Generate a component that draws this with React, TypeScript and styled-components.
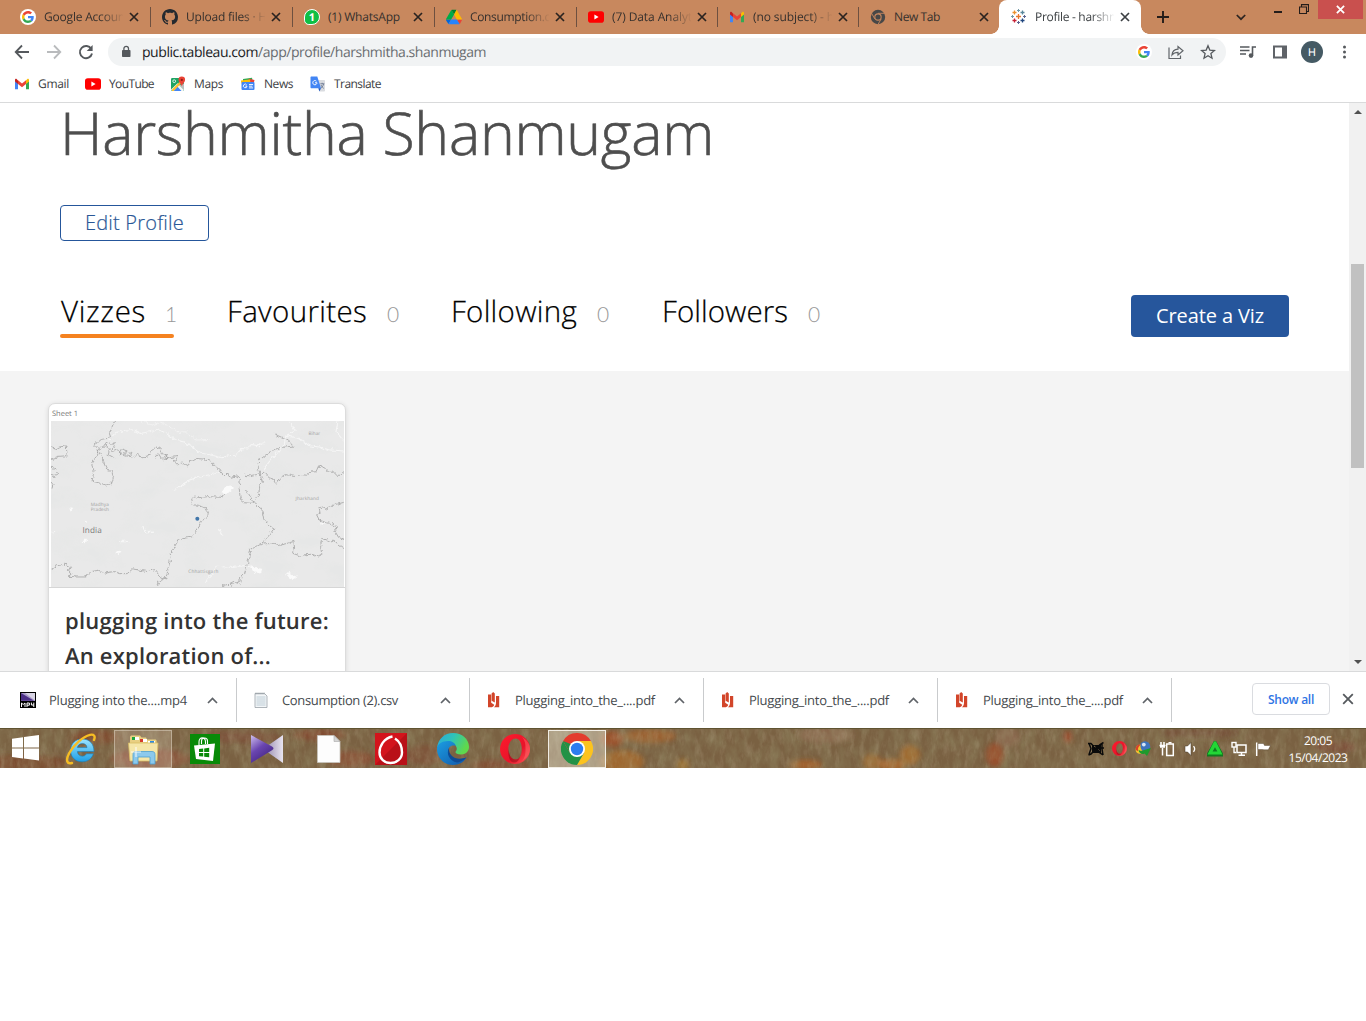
import React, { useLayoutEffect, useRef } from 'react';
import styled, { createGlobalStyle, css } from 'styled-components';

const GlobalStyle = createGlobalStyle`
  *, *::before, *::after { box-sizing: border-box; }
  html, body { margin: 0; background: #fff; }
  body { font-family: "Open Sans", "Noto Sans", sans-serif; text-rendering: geometricPrecision; overflow: hidden; }
  svg { display: block; flex: none; }
  button { font: inherit; margin: 0; padding: 0; border: 0; background: none; color: inherit; }
`;

const FitSpan = styled.span`
  display: inline-block;
  white-space: pre;
  flex: none;
`;

/* Spaces its letters so that the line takes up the given width. */
function Fit({ w, children }: { w: number; children: string }) {
  const ref = useRef<HTMLSpanElement>(null);
  useLayoutEffect(() => {
    const el = ref.current;
    if (!el) return;
    el.style.letterSpacing = '0px';
    const natural = el.getBoundingClientRect().width;
    el.style.letterSpacing = `${(w - natural) / children.length}px`;
  }, [w, children]);
  return <FitSpan ref={ref}>{children}</FitSpan>;
}

/* ---------- brand icons ---------- */

const GoogleG = ({ size = 16 }: { size?: number }) => (
  <svg width={size} height={size} viewBox="0 0 64 64">
    <circle cx="32" cy="32" r="32" fill="#fff" />
    <g transform="translate(8 8)">
      <path fill="#EA4335" d="M24 9.5c3.54 0 6.71 1.22 9.21 3.6l6.85-6.85C35.9 2.38 30.47 0 24 0 14.62 0 6.51 5.38 2.56 13.22l7.98 6.19C12.43 13.72 17.74 9.5 24 9.5z" />
      <path fill="#4285F4" d="M46.98 24.55c0-1.57-.15-3.09-.38-4.55H24v9.02h12.94c-.58 2.96-2.26 5.48-4.78 7.18l7.73 6c4.51-4.18 7.09-10.36 7.09-17.65z" />
      <path fill="#FBBC05" d="M10.53 28.59c-.48-1.45-.76-2.99-.76-4.59s.27-3.14.76-4.59l-7.98-6.19C.92 16.46 0 20.12 0 24c0 3.88.92 7.54 2.56 10.78l7.97-6.19z" />
      <path fill="#34A853" d="M24 48c6.48 0 11.93-2.13 15.89-5.81l-7.73-6c-2.15 1.45-4.92 2.3-8.16 2.3-6.26 0-11.57-4.22-13.47-9.91l-7.98 6.19C6.51 42.62 14.62 48 24 48z" />
    </g>
  </svg>
);

const GithubMark = () => (
  <svg width="16" height="16" viewBox="0 0 16 16">
    <path fill="#24292f" d="M8 0C3.58 0 0 3.58 0 8c0 3.54 2.29 6.53 5.47 7.59.4.07.55-.17.55-.38 0-.19-.01-.82-.01-1.49-2.01.37-2.53-.49-2.69-.94-.09-.23-.48-.94-.82-1.13-.28-.15-.68-.52-.01-.53.63-.01 1.08.58 1.23.82.72 1.21 1.87.87 2.33.66.07-.52.28-.87.51-1.07-1.78-.2-3.64-.89-3.64-3.95 0-.87.31-1.59.82-2.15-.08-.2-.36-1.02.08-2.12 0 0 .67-.21 2.2.82.64-.18 1.32-.27 2-.27s1.36.09 2 .27c1.53-1.04 2.2-.82 2.2-.82.44 1.1.16 1.92.08 2.12.51.56.82 1.27.82 2.15 0 3.07-1.87 3.75-3.65 3.95.29.25.54.73.54 1.48 0 1.07-.01 1.93-.01 2.2 0 .21.15.46.55.38A8.01 8.01 0 0 0 16 8c0-4.42-3.58-8-8-8z" />
  </svg>
);

const WhatsAppBadge = styled.span`
  display: grid;
  place-items: center;
  width: 16px;
  height: 16px;
  border-radius: 50% 50% 50% 30%;
  border: 1.5px solid #fff;
  background: #0fbf45;
  color: #fff;
  font-size: 11px;
  font-weight: 700;
  line-height: 1;
`;

const DriveIcon = () => (
  <svg width="16" height="16" viewBox="0 0 87 78">
    <path fill="#0066da" d="M7 67l4 6c1 2 2 3 3 4l14-24H0c0 2 0 3 1 5z" />
    <path fill="#00ac47" d="M44 25L30 1c-1 1-3 2-3 3L1 49c-1 1-1 3-1 4h28z" />
    <path fill="#ea4335" d="M74 77c1-1 2-2 3-3l8-14c1-2 2-4 2-7H59l6 12z" />
    <path fill="#00832d" d="M44 25L57 1c-1-1-3-1-4-1H34c-1 0-3 0-4 1z" />
    <path fill="#2684fc" d="M59 53H28L14 77c1 1 3 1 4 1h51c2 0 3 0 5-1z" />
    <path fill="#ffba00" d="M73 27L61 4c-1-1-2-2-4-3L44 25l15 28h28c0-1 0-3-1-4z" />
  </svg>
);

const YouTubeIcon = () => (
  <svg width="16" height="16" viewBox="0 0 16 16">
    <rect x="0" y="2.3" width="16" height="11.4" rx="2.8" fill="#f00" />
    <path d="M6.4 5.6v4.8L10.6 8z" fill="#fff" />
  </svg>
);

const GmailIcon = () => (
  <svg width="16" height="16" viewBox="0 0 16 16">
    <path fill="#4285f4" d="M1 5v8.2h3V7z" />
    <path fill="#34a853" d="M12 7v6.2h3V5z" />
    <path fill="#c5221f" d="M1 3.9V5.4L4 8V4.6L2.6 3C1.8 2.6 1 3.2 1 3.9z" />
    <path fill="#fbbc04" d="M12 4.6V8l3-2.6V3.9c0-.7-.9-1.3-1.6-.9z" />
    <path fill="#ea4335" d="M4 4.3L8 7.5l4-3.2V8l-4 3.2L4 8z" />
  </svg>
);

const ChromeMono = () => (
  <svg width="16" height="16" viewBox="0 0 16 16">
    <circle cx="8" cy="8" r="7.2" fill="#474747" />
    <path d="M8 4.3h6.6M4.8 9.9L1.5 4.2M11.2 9.9L7.9 15.6" stroke="#c8885f" strokeWidth=".9" />
    <circle cx="8" cy="8" r="3.7" fill="#c8885f" />
    <circle cx="8" cy="8" r="2.6" fill="#474747" />
  </svg>
);

const TableauIcon = () => {
  const crosses: [number, number, number, string][] = [
    [7.5, 7.5, 2.5, '#e8762c'],
    [3.5, 3.5, 2, '#eb912c'],
    [11.5, 3.5, 2, '#59879b'],
    [3.5, 11.5, 2, '#c72035'],
    [11.5, 11.5, 2, '#1f457e'],
    [7.5, 1.5, 1.5, '#7199a6'],
    [7.5, 13.5, 1.5, '#5b6591'],
    [1.5, 7.5, 1.5, '#7199a6'],
    [13.5, 7.5, 1.5, '#5b6591'],
  ];
  return (
    <svg width="16" height="16" viewBox="0 0 16 16">
      {crosses.map(([x, y, r, c], i) => (
        <path key={i} d={`M${x - r} ${y}h${r * 2}M${x} ${y - r}v${r * 2}`} stroke={c} strokeWidth={r > 1.6 ? 1.3 : 1} />
      ))}
    </svg>
  );
};

const MapsIcon = () => (
  <svg width="16" height="16" viewBox="0 0 16 16">
    <rect x="1" y="2" width="13" height="13" rx="1.2" fill="#1fa463" />
    <path d="M1 13.5L7.5 7.2l6.5 6.6c0 .7-.5 1.2-1.2 1.2H2.2z" fill="#f5f5f5" />
    <path d="M3.5 15l4-4.2 4 4.2z" fill="#4285f4" />
    <path d="M14 7.5L9.5 9.2 14 13.8z" fill="#bdbdbd" />
    <path d="M2 13.6L11.5 4l1.6 1.6L3.6 15H2z" fill="#fbc02d" />
    <circle cx="4.2" cy="5.2" r="1.4" fill="none" stroke="#fff" strokeWidth=".8" />
    <path d="M11.8.6a3.3 3.3 0 0 0-3.3 3.3c0 2.4 2.7 3.6 3.3 6.3.6-2.7 3.3-3.9 3.3-6.3A3.3 3.3 0 0 0 11.8.6z" fill="#ea4335" />
    <circle cx="11.8" cy="3.9" r="1.1" fill="#8c1d18" />
  </svg>
);

const NewsIcon = () => (
  <svg width="16" height="16" viewBox="0 0 16 16">
    <path d="M3 3L12 1.8l1 5.2H3z" fill="#34a853" />
    <path d="M9 2.8l5.5 1.2-1 4H7z" fill="#ea4335" />
    <path d="M.8 4.5l9-1 1 4H1.6z" fill="#fbbc04" />
    <rect x="1.5" y="6" width="13" height="8" rx="1" fill="#4285f4" />
    <path d="M6.7 8.9a1.8 1.8 0 1 0 .3 1.2H5.3M9 8.5h4M9 10.2h3.4M9 11.9h4" stroke="#fff" strokeWidth=".9" fill="none" />
  </svg>
);

const TranslateIcon = () => (
  <svg width="16" height="16" viewBox="0 0 16 16">
    <path d="M7 4h7.2c.5 0 .8.4.8.8v10c0 .5-.4.8-.8.8H9.5z" fill="#dadce0" />
    <path d="M1.5.5h5.8L11 12.3H1.5c-.6 0-1-.4-1-1V1.5c0-.6.4-1 1-1z" fill="#4285f4" />
    <path d="M8.3 12.3H11l-1.6 3.2z" fill="#1a56c4" />
    <path d="M6.4 5.2A2.1 2.1 0 1 0 7 6.8H5" stroke="#fff" strokeWidth="1" fill="none" />
    <path d="M10.3 7.8h4M12.2 6.8v1M13.6 7.8c-.4 2-1.4 3.4-2.6 4.4M11 9c.6 1.6 1.6 2.6 2.8 3.4" stroke="#5f6f8a" strokeWidth=".8" fill="none" />
  </svg>
);

/* ---------- browser chrome ---------- */

const Screen = styled.div`
  width: 1366px;
  height: 1021px;
  background: #fff;
  display: flex;
  flex-direction: column;
  overflow: hidden;
`;

const TabStrip = styled.header`
  flex: none;
  height: 34px;
  background: #c8885e;
  display: flex;
  padding-left: 8px;
`;

const Tab = styled.div<{ $w: number; $active?: boolean; $last?: boolean }>`
  position: relative;
  flex: none;
  width: ${({ $w }) => $w}px;
  height: 34px;
  padding: 0 0 0 12px;
  display: flex;
  align-items: center;
  font-size: 12px;
  color: #35302d;
  ${({ $active, $last }) =>
    $active
      ? css`
          background: #fff;
          border-radius: 8px 8px 0 0;
          color: #3c4043;
          &::before, &::after {
            content: '';
            position: absolute;
            bottom: 0;
            width: 8px;
            height: 8px;
          }
          &::before { left: -8px; background: radial-gradient(circle at 0 0, transparent 7.5px, #fff 8px); }
          &::after { right: -8px; background: radial-gradient(circle at 100% 0, transparent 7.5px, #fff 8px); }
        `
      : !$last &&
        css`
          &::after {
            content: '';
            position: absolute;
            right: -1px;
            top: 7px;
            width: 1px;
            height: 20px;
            background: #6d5040;
          }
        `}
`;

const TabIcon = styled.span`
  width: 16px;
  height: 16px;
  display: grid;
  place-items: center;
  margin-right: 8px;
  flex: none;
`;

const TabLabel = styled.span<{ $fade: boolean }>`
  width: 79px;
  overflow: hidden;
  line-height: 18px;
  ${({ $fade }) => $fade && css`mask-image: linear-gradient(90deg, #000 56px, transparent 80px);`}
`;

const TabClose = styled.button`
  width: 10px;
  height: 10px;
  margin-left: 6px;
`;

const Cross = ({ size, color, sw = 1.7 }: { size: number; color: string; sw?: number }) => (
  <svg width={size} height={size} viewBox="0 0 10 10">
    <path d="M1 1l8 8M9 1l-8 8" stroke={color} strokeWidth={sw} />
  </svg>
);

const NewTabButton = styled.button`
  margin: 11px 0 0 16px;
  width: 12px;
  height: 12px;
`;

const WindowControls = styled.div`
  margin-left: auto;
  display: flex;
  align-items: flex-start;
`;

const SearchTabs = styled.button`
  padding: 14px 28px 0 0;
`;

const Minimise = styled.button`
  margin: 11px 17px 0 0;
  width: 8px;
  height: 2px;
  background: #241d1a;
`;

const Restore = styled.button`
  margin: 4px 9px 0 0;
`;

const CloseWindow = styled.button`
  width: 45px;
  height: 19px;
  margin-right: 3px;
  background: #c9504e;
  display: grid;
  place-items: center;
`;

const Toolbar = styled.div`
  flex: none;
  height: 34px;
  display: flex;
  align-items: center;
  padding: 2px 14px 0 14px;
`;

const NavGroup = styled.div`
  width: 94px;
  display: flex;
  gap: 16px;
`;

const Omnibox = styled.div`
  width: 1118px;
  height: 28px;
  border-radius: 14px;
  background: #f1f3f4;
  display: flex;
  align-items: center;
  padding: 0 10px 0 12px;
  font-size: 14px;
`;

const UrlHost = styled.span`
  margin-left: 10px;
  color: #202124;
`;

const UrlPath = styled.span`
  color: #696d71;
`;

const OmniActions = styled.div`
  margin-left: auto;
  display: flex;
  align-items: center;
  gap: 16px;
`;

const Extensions = styled.div`
  display: flex;
  align-items: center;
  gap: 16px;
  margin-left: 14px;
`;

const Avatar = styled.span`
  width: 22px;
  height: 22px;
  margin: 0 -3px;
  border-radius: 50%;
  background: #455a64;
  color: #fff;
  display: grid;
  place-items: center;
  font: 11px Roboto, sans-serif;
`;

const BookmarkBar = styled.nav`
  flex: none;
  height: 35px;
  border-bottom: 1px solid #d9dadb;
  display: flex;
  padding: 8px 0 0 14px;
  font-size: 12px;
  color: #3c4043;
`;

const Bookmark = styled.a<{ $w: number }>`
  width: ${({ $w }) => $w}px;
  height: 16px;
  display: flex;
  align-items: center;
  gap: 8px;
  line-height: 14px;
`;

/* ---------- page ---------- */

const Viewport = styled.div`
  flex: none;
  height: 568px;
  display: flex;
`;

const Page = styled.main`
  width: 1349px;
  height: 568px;
  overflow: hidden;
  display: flex;
  flex-direction: column;
`;

const ProfileHead = styled.section`
  flex: none;
  height: 268px;
  padding: 0 60px;
`;

const Name = styled.h1`
  margin: 0;
  height: 102px;
  font-size: 59px;
  font-weight: 300;
  line-height: 61px;
  color: #4e4e4e;
  -webkit-text-stroke: 0.6px #4e4e4e;
`;

const EditButton = styled.button`
  width: 149px;
  height: 36px;
  border: 1px solid #25569b;
  border-radius: 4px;
  color: #2a5796;
  font-size: 20px;
  font-weight: 300;
  line-height: 34px;
  display: block;
  -webkit-text-stroke: 0.2px #2a5796;
`;

const ProfileNav = styled.div`
  margin-top: 51px;
  display: flex;
  align-items: flex-start;
`;

const NavTab = styled.a<{ $active?: boolean; $after: number }>`
  height: 46px;
  padding-left: 1px;
  margin-right: ${({ $after }) => $after}px;
  display: flex;
  align-items: baseline;
  font-size: 29.5px;
  font-weight: 300;
  line-height: 38px;
  color: #000;
  -webkit-text-stroke: 0.25px #000;
  position: relative;
  ${({ $active }) =>
    $active &&
    css`
      &::after {
        content: '';
        position: absolute;
        left: 0;
        right: 0;
        bottom: 0;
        height: 4px;
        border-radius: 2px;
        background: #f58220;
      }
    `}
`;

const Count = styled.span<{ $gap: number }>`
  margin-left: ${({ $gap }) => $gap}px;
  font-family: Lato, sans-serif;
  font-size: 21px;
  font-weight: 300;
  color: #999;
  -webkit-text-stroke: 0;
`;

const CreateButton = styled.button`
  margin: 3px 0 0 auto;
  width: 158px;
  height: 42px;
  border-radius: 4px;
  background: #26569c;
  color: #fff;
  font-size: 20px;
  line-height: 42px;
`;

const Gallery = styled.section`
  flex: 1;
  background: #f4f4f4;
  padding: 32px 48px;
  overflow: hidden;
`;

const VizCard = styled.article`
  width: 298px;
  height: 340px;
  background: #fff;
  border: 1px solid #dcdcdc;
  border-radius: 7px;
  box-shadow: 0 1px 5px rgba(0, 0, 0, 0.12);
`;

const Thumb = styled.div`
  height: 184px;
  padding: 0 2px;
  border-bottom: 1px solid #d6d6d6;
`;

const SheetName = styled.div`
  height: 17px;
  padding: 3px 0 0 1px;
  font-size: 7.5px;
  line-height: 14px;
  color: #777;
`;

const VizTitle = styled.h2`
  margin: 16px 0 0 16px;
  font-size: 22px;
  font-weight: 600;
  line-height: 35px;
  color: #333;
  display: flex;
  flex-direction: column;
  align-items: flex-start;
`;

const Scrollbar = styled.div`
  width: 17px;
  background: #f1f1f1;
  display: flex;
  flex-direction: column;
  align-items: center;
  padding: 7px 0 7px;
`;

const ScrollThumb = styled.div`
  width: 13px;
  height: 204px;
  margin: 150px 0 auto;
  background: #c1c1c1;
`;

const Arrow = styled.span<{ $up?: boolean }>`
  border: 4px solid transparent;
  ${({ $up }) => ($up ? 'border-bottom-color: #505050; border-top: 0;' : 'border-top-color: #505050; border-bottom: 0;')}
`;

const MapText = styled.text<{ $dark?: boolean }>`
  font-family: "Open Sans", sans-serif;
  fill: ${({ $dark }) => ($dark ? '#777' : '#a0a0a0')};
`;

const MapDrawing = () => (
  <svg width="293" height="166" viewBox="33 80 877 496" preserveAspectRatio="none">
    <defs>
      <filter id="terrain" x="0" y="0" width="100%" height="100%">
        <feTurbulence type="fractalNoise" baseFrequency="0.008 0.014" numOctaves="4" seed="8" />
        <feColorMatrix values="0 0 0 0 .76  0 0 0 0 .78  0 0 0 0 .77  4 0 0 0 -1.8" />
      </filter>
      <filter id="jag" x="-5%" y="-5%" width="110%" height="110%">
        <feTurbulence type="fractalNoise" baseFrequency="0.09" numOctaves="2" seed="3" result="n" />
        <feDisplacementMap in="SourceGraphic" in2="n" scale="14" xChannelSelector="R" yChannelSelector="G" />
      </filter>
    </defs>
    <rect x="33" y="80" width="877" height="496" fill="#e9e9e9" />
    <rect x="33" y="80" width="877" height="496" filter="url(#terrain)" opacity=".3" />
    <g fill="none" stroke="#f6f6f6" strokeWidth="3" strokeLinejoin="round" filter="url(#jag)">
      <path d="M206 137l20-22 28-8 24-1 22 11 32-6 26-4 20 10 26 20 28 6 22 13 28 20 32 6 30 8 20-6 22-2 18-20 20 2 8-14 24 4 18-12" />
      <path d="M305 80l28 12 24-6 30 8 28 20 22-2 30 25 40-2" strokeWidth="2" />
      <path d="M746 80l18 30-28 14-4 22-22 30-24 26-18 24M740 124l36 8 30 22 30 4 28 8 44 4M908 138l-22-26 6-32" />
      <path d="M395 286l22-8 30-22 36-10 36-8 24-6M495 560l20-22 14-24 50 4 34-6 20 4 20 4" />
      <path d="M304 394l16 20 20-2M534 400l14 22M45 410l-10 2M240 440h24" strokeWidth="4" />
    </g>
    <g fill="#fafafa" filter="url(#jag)">
      <path d="M545 292l10-16 16-3 9 5-8 10-12 10zM630 510l16 8 20 4-4 12-14 3-12-14zM737 535l12-4 2 8 18 6-14 10-14-12zM125 440l10-10 6 8-6 8zM228 474l10-6 4 6-10 4zM840 380l10 4-6 8zM88 338l8 2-6 8zM134 378l7 2-3 8z" />
    </g>
    <g fill="none" stroke="#a3a3a3" strokeWidth="2.4" strokeLinejoin="round" filter="url(#jag)">
      <path d="M223 80l-10 24-5 14 4 12-26 5-18 8-4 12 8 9 18-8 8-12 16 8 8-8 4 10-14 10 6 8 14-6 16 16 10-12 14 4 2 14 18-8 14 10 16-2 10-18 16-12 12 4 6 16 16 4-14 14 20-6 22-4-4 14-8-2 10 10 18-2 16 8 8-16 16-6 28 2 20 10 16 16 8 6 10 14 12 0 10 8 22-4 8 8-4 30 4 32 12 10 20 2 12-8 10-16 4-28 8-12-12-40-4-16 10-12 24-18 30-16 44-5-15-16-32-14-6-10" />
      <path d="M196 150l12 14-4 16 18 10M240 180l6-16 16 6-10 14 20 2M345 192l10-14 10 16 10-14 10 14" />
      <path d="M178 164l-8 20-16 22 8 20-6 34 18 4 26 10 14-6 6-20-6-20-14-4-10-20-8-20-8-16" />
      <path d="M33 160l14 4 10-6 22-4 2 30-32 2-2 6-14 4M33 218l16 8 4 14-10 6-10-4M33 262l6 8-3 12" />
      <path d="M614 242l12 2 20-4 14-2 14-2 12 14 14 4 8 12 12-16 18-10 16 4 12 2 14-6 18 2 14-10 14 0 8-18 18 6 8 10 16 0 16 16 14-12 8 4h20" />
      <path d="M608 282l12 8 12 20 10 16 18 14 6 14 4 20 6 6 10 12 14 10-10 14-22 26-24 14-14 10-4 20-6 24-8 26-10 10-6 20-12-4-12 6-22 2v6" />
      <path d="M668 438l14 12 16-4 18 6 44-12 2 20-4 16 24 8 8-4 24-2 20 8 10-6-4-22 2-20 2-8 26 10 10-4 14 14 20 14" />
      <path d="M910 322l-28 8-16 8-12 6-4-8-14 4 2 14-10 6 8 16 16 6 24 6 14 10-8 10 12 20 16 6" />
      <path d="M556 296l-16 12-40-2-32 4-8-8-6 14 4 14 14 2 20 6 12 14-2 16-22 12-4 16-12 18-8 12-22 4-20 6-14 24-10 16 2 14-8 28-4 22-12 14-10 4-6 12" />
      <path d="M33 524l20-12 22-4 16 8-6 12 8 10-8 6 26 2 24 0 18-16 22-4 20 8 26-4 20 6 20 0 16-14 24 4 22 4 20-6 18 22 18 6" />
    </g>
    <MapText x="804" y="121" fontSize="14">Bihar</MapText>
    <MapText x="765" y="317" fontSize="14" textLength="70">Jharkhand</MapText>
    <MapText x="152" y="333" fontSize="14" textLength="54">Madhya</MapText>
    <MapText x="152" y="350" fontSize="14" textLength="54">Pradesh</MapText>
    <MapText x="444" y="533" fontSize="14" textLength="90">Chhattisgarh</MapText>
    <MapText x="127" y="415" fontSize="24.5" textLength="58" $dark>India</MapText>
    <circle cx="471" cy="372" r="6" fill="#4377aa" />
  </svg>
);

/* ---------- downloads shelf ---------- */

const Shelf = styled.footer`
  flex: none;
  height: 57px;
  border-top: 1px solid #d9dadb;
  background: #fff;
  display: flex;
  align-items: center;
  padding: 0 12px 0 3px;
  font-size: 13px;
  color: #45494d;
`;

const Download = styled.div<{ $size: number; $inset: number }>`
  width: ${({ $size }) => $size}px;
  height: 44px;
  border-right: 1px solid #c9cbcd;
  padding-left: ${({ $inset }) => $inset}px;
  display: flex;
  align-items: center;
`;

const FileIcon = styled.span`
  width: 29px;
  flex: none;
`;

const Chevron = styled.span`
  margin: 0 18px 0 auto;
`;

const ShowAll = styled.button`
  margin-left: auto;
  width: 78px;
  height: 32px;
  margin-bottom: 2px;
  border: 1px solid #dadce0;
  border-radius: 4px;
  color: #2f74e4;
  font-size: 12px;
  font-weight: 600;
`;

const ShelfClose = styled.button`
  margin: 0 0 2px 12px;
`;

const Mp4Icon = () => (
  <svg width="16" height="16" viewBox="0 0 16 16">
    <rect width="16" height="16" fill="#000" />
    <rect x="1" y="1" width="14" height="8" fill="#a99bc9" />
    <path d="M1 1l13 7.8H1z" fill="#4b2f86" />
    <path d="M15 1v7.6L5 1z" fill="#d8d4e4" />
    <path d="M1.5 15v-4l1.7 1.5L5 11v4M7 15v-4h2.4v2.2H7M11.4 10.6v2.4H14M13.8 10.6V15" stroke="#fff" strokeWidth="1" fill="none" />
  </svg>
);

const CsvIcon = () => (
  <svg width="16" height="16" viewBox="0 0 16 16">
    <path d="M2 1.500h9.500L14 4v11.500H2z" fill="#f3f6f8" stroke="#9aa2a8" strokeWidth=".8" />
    <path d="M3 .5v2M5 .5v2M7 .5v2M9 .5v2M11 .5v2" stroke="#8f979d" strokeWidth=".8" />
    <path d="M3.500 5h9M3.500 7h9M3.500 9h9M3.500 11h9M3.500 13h9" stroke="#b9c8d2" strokeWidth=".9" />
  </svg>
);

const PdfIcon = () => (
  <svg width="16" height="16" viewBox="0 0 16 16">
    <path d="M2 2.500h3.200v8.300l3 2c-.2 1.300-1 2-2.400 2.500H2z" fill="#d2452a" />
    <path d="M5.600 1.500L7.200 0l1.600 1.500V10.500L5.600 8.800z" fill="#d2452a" />
    <path d="M10 4h3.200v11.300H7.900C9.700 14 10 12.500 10 10z" fill="#d2452a" />
  </svg>
);

/* ---------- taskbar ---------- */

const Taskbar = styled.div`
  position: relative;
  flex: none;
  height: 40px;
  overflow: hidden;
  background: #796141;
  border-top: 1px solid #5f5331;
`;

const Wallpaper = styled.div`
  position: absolute;
  inset: 0;
`;

const TaskRow = styled.div`
  position: relative;
  height: 39px;
  display: flex;
  align-items: center;
`;

const StartButton = styled.button`
  width: 50px;
  height: 39px;
  padding: 0 0 2px 0;
  display: grid;
  place-items: center;
`;

const TaskSlot = styled.button<{ $state?: 'open' | 'focus' }>`
  width: 58px;
  height: 38px;
  margin: 0 2px;
  display: grid;
  place-items: center;
  border: 1px solid transparent;
  ${({ $state }) => $state === 'open' && css`background: rgba(215, 195, 175, 0.28); border-color: rgba(225, 215, 200, 0.5);`}
  ${({ $state }) => $state === 'focus' && css`background: rgba(225, 220, 200, 0.48); border-color: #f1ede4;`}
`;

const Tray = styled.div`
  margin-left: auto;
  display: flex;
  align-items: center;
  gap: 8px;
`;

const Clock = styled.div`
  width: 76px;
  margin: 0 10px 0 9px;
  color: #fff;
  font-size: 12px;
  line-height: 17px;
  display: flex;
  flex-direction: column;
  align-items: center;
`;

const petals: [number, number, number, number, string][] = [
  [20, 34, 50, 8, '#7c4a30'], [95, 8, 24, 7, '#804a30'], [150, 30, 40, 10, '#8a4e36'], [240, 8, 40, 6, '#7c5038'],
  [320, 6, 26, 6, '#82482f'], [350, 30, 24, 8, '#8a4c32'], [425, 26, 20, 10, '#7f533a'], [500, 36, 30, 5, '#844e34'],
  [622, 33, 22, 12, '#a56a2e'], [612, 10, 12, 8, '#a0522a'], [650, 7, 26, 7, '#a0602e'], [806, 36, 16, 5, '#a8602a'],
  [872, 33, 9, 8, '#a0672d'], [892, 36, 14, 6, '#ac662a'], [910, 26, 10, 10, '#a66c2e'], [995, 26, 9, 12, '#9c4c2b'],
  [826, 6, 28, 8, '#8c6a50'], [1008, 8, 12, 10, '#8c6a50'], [683, 36, 6, 6, '#a0722f'], [1068, 8, 4, 6, '#a04a2a'],
  [1200, 4, 40, 4, '#765038'], [1335, 18, 22, 6, '#7e503a'],
];

const WallpaperDrawing = () => (
  <svg width="1366" height="40" viewBox="0 0 1366 40">
    <defs>
      <filter id="grass" x="0" y="0" width="100%" height="100%">
        <feTurbulence type="fractalNoise" baseFrequency="0.1 0.05" numOctaves="4" seed="4" />
        <feColorMatrix values="0 0 0 0 .38  0 0 0 0 .39  0 0 0 0 .21  0 2 0 0 -.7" />
      </filter>
      <filter id="light" x="0" y="0" width="100%" height="100%">
        <feTurbulence type="fractalNoise" baseFrequency="0.2 0.07" numOctaves="4" seed="12" />
        <feColorMatrix values="0 0 0 0 .6  0 0 0 0 .51  0 0 0 0 .36  0 0 3 0 -1.4" />
      </filter>
      <filter id="soft"><feGaussianBlur stdDeviation="2.5" /></filter>
    </defs>
    <rect width="1366" height="40" fill="#7a6142" />
    <g filter="url(#soft)">
      {petals.map(([x, y, rx, ry, c], i) => (
        <ellipse key={i} cx={x} cy={y} rx={rx} ry={ry} fill={c} opacity=".85" />
      ))}
    </g>
    <rect width="1366" height="40" filter="url(#grass)" opacity=".3" />
    <rect width="1366" height="40" filter="url(#light)" opacity=".16" />
  </svg>
);

const WindowsLogo = () => (
  <svg width="27" height="26" viewBox="0 0 27 26">
    <path fill="#fff" d="M0 3.8l11-1.6v10.2H0zM12 2l15-2v12.4H12zM0 13.4h11v10.2L0 22zM12 13.4h15V25.6l-15-2z" />
  </svg>
);

const IeIcon = () => (
  <svg width="32" height="32" viewBox="0 0 32 32">
    <defs>
      <linearGradient id="ie" x1="0" y1="0" x2="0" y2="1"><stop offset="0" stopColor="#9ce4ff" /><stop offset="1" stopColor="#1d9fe6" /></linearGradient>
    </defs>
    <path d="M29 18.6H12.4c.2 2.8 2.2 4.6 4.8 4.6 2 0 3.4-.8 4.2-2.4h7c-1.6 5-5.8 8-11.2 8-7 0-11.6-4.6-11.6-11.2C5.6 10.6 10.4 6 17.2 6 24.4 6 29 10.6 29 18.6zM22 14.6c-.2-2.4-2-4-4.6-4s-4.6 1.6-5 4z" fill="url(#ie)" stroke="#167db8" strokeWidth=".6" />
    <path d="M7 30C2 31.5.4 27.5 4 20.5 8.5 12 18 3.5 25 1.8c4-.9 5.6 1.3 4 5.2" fill="none" stroke="#f6bd24" strokeWidth="2.4" strokeLinecap="round" />
  </svg>
);

const ExplorerIcon = () => (
  <svg width="34" height="32" viewBox="0 0 34 32">
    <path d="M4 4c0-1 1-1.6 2-1.6h8l1.5 2H20l1 2h8c1 0 1.6.6 1.6 1.6V28H4z" fill="#e8cf82" />
    <path d="M6 4h7v3H6zM14 6h7v3h-7zM22 8h7v3h-7z" fill="#fff" />
    <path d="M6 4h3v3H6z" fill="#1ea43c" /><path d="M14 6h3v3h-3z" fill="#d43b2b" /><path d="M24 8h4v3h-4z" fill="#2b8be0" />
    <path d="M2.5 10H32l-1 18H4z" fill="#f5e6a8" stroke="#d8bd62" strokeWidth=".8" />
    <path d="M7 31V21.5c0-2 1-3 3-3h16c2 0 3 1 3 3V31h-5v-7H12v7z" fill="#8cc9ec" stroke="#4c9fd0" strokeWidth=".8" />
    <path d="M10 14v10M5 19h10" stroke="#fff" strokeWidth="1.2" opacity=".8" />
  </svg>
);

const StoreIcon = () => (
  <svg width="30" height="30" viewBox="0 0 30 30">
    <rect width="30" height="30" fill="#088a08" />
    <path d="M9 11V8c0-5.5 6.5-5.5 6.5 0v2M11.5 10V7c0-4 6-4 6 0v3" fill="none" stroke="#fff" strokeWidth="1.1" />
    <path d="M4 11.5l21-2-2 17.5-17-2z" fill="#fff" />
    <path d="M9 15l4.2-.5V18H9zM14.2 14.4l5-.6V18h-5zM9 19h4.2v3.6L9 22.2zM14.2 19h5v4.3l-5-.6z" fill="#088a08" />
  </svg>
);

const KmIcon = () => (
  <svg width="32" height="28" viewBox="0 0 32 28">
    <defs>
      <linearGradient id="km" x1="0" y1="0" x2=".6" y2="1"><stop offset="0" stopColor="#cfc0ee" /><stop offset=".5" stopColor="#6a46b0" /><stop offset="1" stopColor="#422382" /></linearGradient>
      <linearGradient id="km2" x1="0" y1="0" x2="1" y2="0"><stop offset="0" stopColor="#8d80a8" /><stop offset="1" stopColor="#e8e4f0" /></linearGradient>
    </defs>
    <path d="M32 0v28L12 14z" fill="url(#km2)" />
    <path d="M0 0l21 11.5c2 1.2 2 2.5 0 3.7L0 28z" fill="url(#km)" />
  </svg>
);

const DocIcon = () => (
  <svg width="24" height="28" viewBox="0 0 24 28">
    <path d="M.5.5h16.5l6 6V27.5H.5z" fill="#fdfdfd" stroke="#c8c4bc" strokeWidth=".8" />
    <path d="M17 .5v6h6z" fill="#d5d5d5" stroke="#aaa" strokeWidth=".6" />
  </svg>
);

const DropIcon = () => (
  <svg width="32" height="32" viewBox="0 0 32 32">
    <rect width="32" height="32" fill="#d3141c" />
    <path d="M32 0v32H0z" fill="#a90d14" opacity=".6" />
    <path d="M17.5 3.5C9 5 4.500 13 4.500 19.500 4.500 26 9.500 30 15.500 30S27 26 27 19.500C27 13 24 8 20 5.500" fill="none" stroke="#fff" strokeWidth="2.4" />
  </svg>
);

const EdgeIcon = () => (
  <svg width="32" height="32" viewBox="0 0 32 32">
    <defs>
      <linearGradient id="ed1" x1="0" y1="0" x2="1" y2=".4"><stop offset="0" stopColor="#2aa8de" /><stop offset=".5" stopColor="#2fc3b8" /><stop offset="1" stopColor="#5fd94c" /></linearGradient>
      <linearGradient id="ed2" x1="0" y1="0" x2="1" y2="1"><stop offset="0" stopColor="#1b9de2" /><stop offset="1" stopColor="#1257a8" /></linearGradient>
    </defs>
    <path d="M0 15C1 6 7.5 0 16 0c9 0 16 6 16 14 0 4.5-3.5 7.5-8 7.5-3.5 0-5.5-1-5.5-2.2 0-.9 1.3-1.5 1.3-3.7 0-3-3.3-5.6-7.8-5.6C6 10 1.5 12 0 15z" fill="url(#ed1)" />
    <path d="M0 16C0 11 5 8 11 8c4 0 7 2 8 5-6-2-9 3-7 8 2 5 8 7.5 17.5 3.5C27 29 22 32 16 32 7 32 0 25 0 16z" fill="url(#ed2)" />
    <path d="M12 15c-3 5 0 13 8 14.5 4-.5 8-3 9.5-5.3C20 28 11.5 24 12 15z" fill="#0e4b95" />
  </svg>
);

const OperaIcon = ({ size = 30 }: { size?: number }) => (
  <svg width={size} height={size} viewBox="0 0 30 30">
    <defs>
      <linearGradient id="op" x1="0" y1="0" x2="1" y2="1"><stop offset="0" stopColor="#ff1b2d" /><stop offset=".6" stopColor="#e8142a" /><stop offset="1" stopColor="#ff5a5a" /></linearGradient>
    </defs>
    <path fillRule="evenodd" d="M15 0a15 15 0 1 0 0 30 15 15 0 0 0 0-30zM15.5 4.5c4 0 6.3 4.8 6.3 10.5s-2.3 10.5-6.3 10.5S8.3 20.7 8.3 15 11.5 4.5 15.5 4.5z" fill="url(#op)" />
    <path d="M22 3c3 3 3.5 7 3.5 12S25 24 22 27c5-3 8-7 8-12S27 6 22 3z" fill="#ff6a6a" opacity=".5" />
    <path d="M8.5 13C8.5 20 11 25.5 15.5 25.5c2 0 3.5-1 4.5-3-1 4-3 6-6 6-4 0-6.5-6-5.5-15.5z" fill="#8f0a16" opacity=".5" />
  </svg>
);

const ChromeIcon = () => (
  <svg width="32" height="32" viewBox="0 0 32 32">
    <path d="M2.14 8A16 16 0 0 1 29.86 8L16 8z" fill="#e33b2e" />
    <path d="M29.86 8A16 16 0 0 1 16 32L22.9 20 22.9 12 16 8z" fill="#fcc31e" />
    <path d="M16 32A16 16 0 0 1 2.14 8L9.07 20 16 24 22.9 20z" fill="#239246" />
    <path d="M2.14 8L9.07 20 16 8z" fill="#e33b2e" />
    <path d="M2.14 8L9.07 20 12 12z" fill="#239246" />
    <circle cx="16" cy="16" r="8" fill="#fff" />
    <circle cx="16" cy="16" r="6.2" fill="#2c7cf0" />
  </svg>
);

const BugIcon = () => (
  <svg width="16" height="16" viewBox="0 0 16 16">
    <path d="M4 4h9v8H4z" fill="#0a0a0a" />
    <path d="M0 2.500h3l9 9.500 3 2M15.500 1.500l-3.500 2L3 13l-2.500 1M1 2.500l2 5-2 6M14 3v5l1 6M13 7h3" stroke="#0a0a0a" strokeWidth="1.5" fill="none" />
    <path d="M6 5l1.500 1M10.500 8.500l1 1" stroke="#7c6748" strokeWidth="1" />
  </svg>
);

const IdmIcon = () => (
  <svg width="16" height="16" viewBox="0 0 16 16">
    <circle cx="10" cy="5.5" r="5.2" fill="#3f74bd" />
    <circle cx="8.800" cy="3.6" r="1.9" fill="#d7e7f7" />
    <path d="M.6 9C.6 5 3 3.500 5.600 3.800 5 6 6 9.500 9 11c-3 3-8.400 2-8.400-2z" fill="#f1c22e" />
    <path d="M.6 7.500C1 4.500 3.600 3 6 3.600 4 5 2.600 7 3 10 1.600 10 .6 9 .6 7.500z" fill="#d8432b" />
    <path d="M3.500 8.500c1 1.500 2.500 1.500 4 1L16 7l-4 8-2.500-2.500C7 14 3.500 12 3.500 8.500z" fill="#1e9a2c" />
  </svg>
);

const PowerIcon = () => (
  <svg width="16" height="16" viewBox="0 0 16 16">
    <path d="M2 1v3M5 1v3M.5 4.500h6M1 6h5M3.500 7v7.500" stroke="#fff" strokeWidth="1.5" />
    <rect x="7.7" y="3" width="6.6" height="11.5" fill="none" stroke="#fff" strokeWidth="1.5" />
    <path d="M9.500 1.700h3" stroke="#fff" strokeWidth="1.4" />
  </svg>
);

const SpeakerIcon = () => (
  <svg width="16" height="16" viewBox="0 0 16 16">
    <path d="M2 5h2.500L8 1.500v13L4.500 11H2z" fill="#fff" stroke="#3d3222" strokeWidth=".5" />
    <path d="M10.500 5.200c1.500 1.800 1.500 3.800 0 5.600" fill="none" stroke="#fff" strokeWidth="1.3" />
  </svg>
);

const TriangleIcon = () => (
  <svg width="16" height="16" viewBox="0 0 16 16">
    <path d="M6.800.3h2.400L16 12.500v3H0v-3z" fill="#0f7a1f" />
    <path fillRule="evenodd" d="M7 .5h2L15.500 13.500H.5zM8 6.200l2.400 4.300H5.600z" fill="#22d636" />
  </svg>
);

const NetworkIcon = () => (
  <svg width="16" height="16" viewBox="0 0 16 16">
    <path d="M6 4h9v7.500H6zM10.500 11.500V14M7.500 14.300h6.500" fill="none" stroke="#fff" strokeWidth="1.5" />
    <rect x="1" y="1.5" width="4" height="4.5" fill="none" stroke="#fff" strokeWidth="1.4" />
    <path d="M3 6v5.500h2" fill="none" stroke="#fff" strokeWidth="1.3" />
  </svg>
);

const FlagIcon = () => (
  <svg width="16" height="16" viewBox="0 0 16 16">
    <path d="M1.700 1.500V15" stroke="#fff" strokeWidth="1.5" />
    <path d="M3 2.500h5.500l1 2H15.500l-2.200 4.300H9L7.500 8.500H3z" fill="#fff" stroke="#4a3a28" strokeWidth=".4" />
  </svg>
);

/* ---------- data ---------- */

const tabs: { icon: React.ReactNode; label: string; w: number; size: number; active?: boolean }[] = [
  { icon: <GoogleG />, label: 'Google Accoun', w: 81, size: 142 },
  { icon: <GithubMark />, label: 'Upload files · H', w: 81, size: 142 },
  { icon: <WhatsAppBadge>1</WhatsAppBadge>, label: '(1) WhatsApp', w: 72, size: 142 },
  { icon: <DriveIcon />, label: 'Consumption.c', w: 80, size: 142 },
  { icon: <YouTubeIcon />, label: '(7) Data Analyt', w: 80, size: 141 },
  { icon: <GmailIcon />, label: '(no subject) - h', w: 81, size: 141 },
  { icon: <ChromeMono />, label: 'New Tab', w: 46, size: 141 },
  { icon: <TableauIcon />, label: 'Profile - harshn', w: 81, size: 142, active: true },
];

const bookmarks: [React.ReactNode, string, number, number][] = [
  [<GmailIcon />, 'Gmail', 31, 71],
  [<YouTubeIcon />, 'YouTube', 45, 85],
  [<MapsIcon />, 'Maps', 29, 70],
  [<NewsIcon />, 'News', 29, 70],
  [<TranslateIcon />, 'Translate', 47, 80],
];

const sections: { name: string; w: number; count: string; gap: number; after: number; active?: boolean }[] = [
  { name: 'Vizzes', w: 85, count: '1', gap: 19, after: 52, active: true },
  { name: 'Favourites', w: 140, count: '0', gap: 20, after: 51 },
  { name: 'Following', w: 126, count: '0', gap: 20, after: 52 },
  { name: 'Followers', w: 126, count: '0', gap: 20, after: 0 },
];

const downloads: { icon: React.ReactNode; name: string; w: number; size: number; inset: number }[] = [
  { icon: <Mp4Icon />, name: 'Plugging into the....mp4', w: 138, size: 234, inset: 17 },
  { icon: <CsvIcon />, name: 'Consumption (2).csv', w: 116, size: 233, inset: 16 },
  { icon: <PdfIcon />, name: 'Plugging_into_the_....pdf', w: 140, size: 234, inset: 16 },
  { icon: <PdfIcon />, name: 'Plugging_into_the_....pdf', w: 140, size: 234, inset: 16 },
  { icon: <PdfIcon />, name: 'Plugging_into_the_....pdf', w: 140, size: 234, inset: 16 },
];

const tasks: { icon: React.ReactNode; state?: 'open' | 'focus' }[] = [
  { icon: <IeIcon /> },
  { icon: <ExplorerIcon />, state: 'open' },
  { icon: <StoreIcon /> },
  { icon: <KmIcon /> },
  { icon: <DocIcon /> },
  { icon: <DropIcon /> },
  { icon: <EdgeIcon /> },
  { icon: <OperaIcon /> },
  { icon: <ChromeIcon />, state: 'focus' },
];

export default function App() {
  return (
    <Screen>
      <GlobalStyle />
      <TabStrip>
        {tabs.map((t, i) => (
          <Tab key={t.label} $w={t.size} $active={t.active} $last={i === tabs.length - 2}>
            <TabIcon>{t.icon}</TabIcon>
            <TabLabel $fade={t.w > 75}><Fit w={t.w}>{t.label}</Fit></TabLabel>
            <TabClose><Cross size={10} color={t.active ? '#3c4043' : '#2a2320'} /></TabClose>
          </Tab>
        ))}
        <NewTabButton>
          <svg width="12" height="12" viewBox="0 0 12 12"><path d="M6 0v12M0 6h12" stroke="#241d1a" strokeWidth="1.9" /></svg>
        </NewTabButton>
        <WindowControls>
          <SearchTabs>
            <svg width="10" height="7" viewBox="0 0 10 7"><path d="M.8 1l4.2 4.2L9.2 1" fill="none" stroke="#2e2521" strokeWidth="1.7" /></svg>
          </SearchTabs>
          <Minimise />
          <Restore>
            <svg width="10" height="10" viewBox="0 0 10 10"><path d="M.5 3h7v6.5h-7zM2.5 3V.6h7v6.9h-2" fill="none" stroke="#241d1a" strokeWidth="1.1" /></svg>
          </Restore>
          <CloseWindow><Cross size={9} color="#fff" sw={2} /></CloseWindow>
        </WindowControls>
      </TabStrip>

      <Toolbar>
        <NavGroup>
          <svg width="16" height="16" viewBox="0 0 16 16"><path d="M15 8H2M8 1.5L1.7 8 8 14.5" fill="none" stroke="#55595d" strokeWidth="1.8" /></svg>
          <svg width="16" height="16" viewBox="0 0 16 16"><path d="M1 8h13M8 1.5L14.3 8 8 14.5" fill="none" stroke="#b9bbbd" strokeWidth="1.8" /></svg>
          <svg width="16" height="16" viewBox="0 0 16 16"><path d="M13.3 5A6.1 6.1 0 1 0 14 9.5" fill="none" stroke="#55595d" strokeWidth="1.9" /><path d="M14.6 1v6H8.7z" fill="#55595d" /></svg>
        </NavGroup>
        <Omnibox>
          <svg width="12" height="14" viewBox="0 0 12 14"><rect x="2" y="5" width="8.5" height="7" rx=".8" fill="#55595d" /><path d="M3.9 5.5V3.6a2.3 2.3 0 0 1 4.6 0v1.9" fill="none" stroke="#55595d" strokeWidth="1.3" /></svg>
          <UrlHost><Fit w={116}>public.tableau.com</Fit></UrlHost>
          <UrlPath><Fit w={228}>/app/profile/harshmitha.shanmugam</Fit></UrlPath>
          <OmniActions>
            <GoogleG size={16} />
            <svg width="16" height="16" viewBox="0 0 16 16"><path d="M1 3.5v11h11.5v-3M4 11c.3-4 2.6-5.7 6-5.8V2.5l5 4.3-5 4.2V8.4C7.5 8.4 5.6 9 4 11z" fill="none" stroke="#606468" strokeWidth="1.2" /></svg>
            <svg width="16" height="16" viewBox="0 0 16 16"><path d="M8 1.8l1.8 4.3 4.7.4-3.6 3.1 1.1 4.6L8 11.7l-4 2.5 1.1-4.6L1.5 6.5l4.7-.4z" fill="none" stroke="#55595d" strokeWidth="1.3" /></svg>
          </OmniActions>
        </Omnibox>
        <Extensions>
          <svg width="16" height="16" viewBox="0 0 16 16"><path d="M0 3h9.5M0 6.5h9.5M0 10h6" stroke="#55595d" strokeWidth="1.5" /><path d="M12.5 11.5V3H16" fill="none" stroke="#55595d" strokeWidth="1.6" /><circle cx="11" cy="11.6" r="2.3" fill="#55595d" /></svg>
          <svg width="16" height="16" viewBox="0 0 16 16"><path fillRule="evenodd" d="M1 1.5h14v13H1zM3 3.5v9h7v-9z" fill="#5f6368" /></svg>
          <Avatar>H</Avatar>
          <svg width="16" height="16" viewBox="0 0 16 16"><circle cx="8.5" cy="3" r="1.5" fill="#55595d" /><circle cx="8.5" cy="8" r="1.5" fill="#55595d" /><circle cx="8.5" cy="13" r="1.5" fill="#55595d" /></svg>
        </Extensions>
      </Toolbar>

      <BookmarkBar>
        {bookmarks.map(([icon, label, w, slot]) => (
          <Bookmark key={label} $w={slot}>{icon}<Fit w={w}>{label}</Fit></Bookmark>
        ))}
      </BookmarkBar>

      <Viewport>
        <Page>
          <ProfileHead>
            <Name><Fit w={654}>Harshmitha Shanmugam</Fit></Name>
            <EditButton><Fit w={99}>Edit Profile</Fit></EditButton>
            <ProfileNav>
              {sections.map((s) => (
                <NavTab key={s.name} $active={s.active} $after={s.after}>
                  <Fit w={s.w}>{s.name}</Fit>
                  <Count $gap={s.gap}><Fit w={s.active ? 9 : 12}>{s.count}</Fit></Count>
                </NavTab>
              ))}
              <CreateButton><Fit w={108}>Create a Viz</Fit></CreateButton>
            </ProfileNav>
          </ProfileHead>
          <Gallery>
            <VizCard>
              <Thumb>
                <SheetName><Fit w={26}>Sheet 1</Fit></SheetName>
                <MapDrawing />
              </Thumb>
              <VizTitle>
                <Fit w={264}>plugging into the future:</Fit>
                <Fit w={206}>An exploration of...</Fit>
              </VizTitle>
            </VizCard>
          </Gallery>
        </Page>
        <Scrollbar>
          <Arrow $up />
          <ScrollThumb />
          <Arrow />
        </Scrollbar>
      </Viewport>

      <Shelf>
        {downloads.map((d, i) => (
          <Download key={i} $size={d.size} $inset={d.inset}>
            <FileIcon>{d.icon}</FileIcon>
            <Fit w={d.w}>{d.name}</Fit>
            <Chevron>
              <svg width="11" height="7" viewBox="0 0 11 7"><path d="M1 6l4.5-4.5L10 6" fill="none" stroke="#5f6368" strokeWidth="1.7" /></svg>
            </Chevron>
          </Download>
        ))}
        <ShowAll><Fit w={46}>Show all</Fit></ShowAll>
        <ShelfClose><Cross size={12} color="#55595d" sw={1.5} /></ShelfClose>
      </Shelf>

      <Taskbar>
        <Wallpaper><WallpaperDrawing /></Wallpaper>
        <TaskRow>
          <StartButton><WindowsLogo /></StartButton>
          {tasks.map((t, i) => (
            <TaskSlot key={i} $state={t.state}>{t.icon}</TaskSlot>
          ))}
          <Tray>
            <BugIcon />
            <OperaIcon size={15} />
            <IdmIcon />
            <PowerIcon />
            <SpeakerIcon />
            <TriangleIcon />
            <NetworkIcon />
            <FlagIcon />
          </Tray>
          <Clock>
            <Fit w={28}>20:05</Fit>
            <Fit w={59}>15/04/2023</Fit>
          </Clock>
        </TaskRow>
      </Taskbar>
    </Screen>
  );
}
